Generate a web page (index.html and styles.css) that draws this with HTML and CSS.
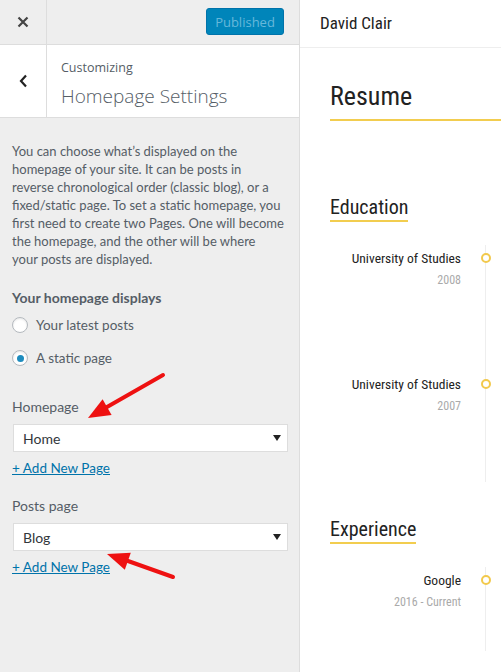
FILE: index.html
```html
<!DOCTYPE html>
<html lang="en">
<head>
    <meta charset="UTF-8">
    <title>Customize: Homepage Settings</title>
    <link rel="stylesheet" href="styles.css">
</head>
<body>
    <!-- Painel do customizer -->
    <div class="sidebar">
        <div class="topbar">
            <div class="close-btn">
                <svg width="12" height="12" viewBox="0 0 12 12"><path d="M1.5 1.5 L10.5 10.5 M10.5 1.5 L1.5 10.5" stroke="#444" stroke-width="2.2"/></svg>
            </div>
            <div class="topbar-space"></div>
            <button class="publish-button">Published</button>
        </div>

        <div class="section-head">
            <div class="back-btn">
                <svg width="9" height="14" viewBox="0 0 9 14"><path d="M7 1.5 L2 7 L7 12.5" fill="none" stroke="#222" stroke-width="2.2"/></svg>
            </div>
            <div class="section-title">
                <span class="section-sub">Customizing</span>
                <span class="section-name">Homepage Settings</span>
            </div>
        </div>

        <div class="panel">
            <p class="description">You can choose what’s displayed on the homepage of your site. It can be posts in reverse chronological order (classic blog), or a fixed/static page. To set a static homepage, you first need to create two Pages. One will become the homepage, and the other will be where your&nbsp;posts are displayed.</p>

            <div class="field-title first">Your homepage displays</div>
            <div class="radio-row"><span class="radio"></span>Your latest posts</div>
            <div class="radio-row"><span class="radio checked"></span>A static page</div>

            <div class="field-title">Homepage</div>
            <div class="select">
                <span>Home</span>
                <svg width="8" height="6" viewBox="0 0 8 6"><path d="M0 0 H8 L4 6 Z" fill="#222"/></svg>
            </div>
            <a class="add-link" href="#">+ Add New Page</a>

            <div class="field-title">Posts page</div>
            <div class="select">
                <span>Blog</span>
                <svg width="8" height="6" viewBox="0 0 8 6"><path d="M0 0 H8 L4 6 Z" fill="#222"/></svg>
            </div>
            <a class="add-link" href="#">+ Add New Page</a>
        </div>

        <!-- Setas de destaque -->
        <svg class="arrows" width="299" height="672" viewBox="0 0 299 672">
            <line x1="163" y1="375" x2="107" y2="407" stroke="#ee1111" stroke-width="4" stroke-linecap="round"/>
            <polygon points="88,418 111.6,414.9 102.6,399.3" fill="#ee1111"/>
            <line x1="173" y1="577" x2="128" y2="561" stroke="#ee1111" stroke-width="4" stroke-linecap="round"/>
            <polygon points="107,554 130.8,552.7 124.8,569.7" fill="#ee1111"/>
        </svg>
    </div>

    <!-- Pré-visualização do site -->
    <div class="preview">
        <div class="site-header">David Clair</div>
        <div class="content">
            <h1 class="page-title">Resume</h1>

            <h2 class="block-title edu">Education</h2>
            <div class="timeline">
                <div class="tl-item">
                    <div class="tl-info">
                        <div class="tl-name">University of Studies</div>
                        <div class="tl-date">2008</div>
                    </div>
                    <span class="tl-dot"></span>
                </div>
                <div class="tl-item">
                    <div class="tl-info">
                        <div class="tl-name">University of Studies</div>
                        <div class="tl-date">2007</div>
                    </div>
                    <span class="tl-dot"></span>
                </div>
            </div>

            <h2 class="block-title exp">Experience</h2>
            <div class="timeline open">
                <div class="tl-item">
                    <div class="tl-info">
                        <div class="tl-name">Google</div>
                        <div class="tl-date">2016 - Current</div>
                    </div>
                    <span class="tl-dot"></span>
                </div>
            </div>
        </div>
    </div>
</body>
</html>
```

FILE: styles.css
```css
body {
    margin: 0;
    height: 672px;
    display: flex;
    overflow: hidden;
    font-family: 'Open Sans', 'Noto Sans', sans-serif;
    background: #fff;
}

/* ---------- sidebar ---------- */

.sidebar {
    position: relative;
    width: 299px;
    flex-shrink: 0;
    background: #eee;
    border-right: 1px solid #ddd;
}

.topbar {
    display: flex;
    align-items: center;
    height: 44px;
    border-bottom: 1px solid #ddd;
}

.close-btn {
    width: 47px;
    height: 44px;
    display: flex;
    justify-content: center;
    align-items: center;
    border-right: 1px solid #ddd;
    box-sizing: border-box;
}

.topbar-space {
    flex: 1;
}

.publish-button {
    width: 78px;
    height: 27px;
    margin: 0 15px 1px 0;
    padding: 0;
    border: 1px solid #0073aa;
    border-radius: 3px;
    background: #0085ba;
    color: #66b8da;
    font-family: inherit;
    font-size: 13px;
}

.section-head {
    display: flex;
    height: 72px;
    background: #fff;
    border-bottom: 1px solid #ddd;
}

.back-btn {
    width: 47px;
    display: flex;
    justify-content: center;
    align-items: center;
    border-right: 1px solid #ddd;
    box-sizing: border-box;
}

.section-title {
    display: flex;
    flex-direction: column;
    padding: 14px 0 0 14px;
    color: #555d66;
}

.section-sub {
    font-size: 12.5px;
    line-height: 18px;
}

.section-name {
    margin-top: 6px;
    font-size: 19px;
    font-weight: 300;
    line-height: 26px;
}

.panel {
    padding: 24px 14px 0 12px;
    color: #555d66;
    font-family: 'Lato', 'Open Sans', sans-serif;
    font-size: 13px;
}

.description {
    margin: 0;
    line-height: 18px;
}

.field-title {
    margin: 28px 0 7px;
    font-size: 14px;
    line-height: 20px;
}

.field-title.first {
    margin: 20px 0 6px;
    font-weight: 700;
}

.radio-row {
    display: flex;
    align-items: center;
    height: 22px;
    margin-bottom: 11px;
    font-size: 13.5px;
}

.radio-row:last-of-type {
    margin-bottom: 0;
}

.radio {
    width: 16px;
    height: 16px;
    margin-right: 8px;
    border: 1px solid #b4b9be;
    border-radius: 50%;
    background: #fff;
    box-shadow: inset 0 1px 2px rgba(0, 0, 0, 0.1);
    box-sizing: border-box;
    display: flex;
    justify-content: center;
    align-items: center;
}

.radio.checked::after {
    content: '';
    width: 7px;
    height: 7px;
    border-radius: 50%;
    background: #1e8cbe;
}

.select {
    display: flex;
    justify-content: space-between;
    align-items: center;
    width: 275px;
    height: 28px;
    margin-left: 1px;
    padding: 0 6px 0 9px;
    box-sizing: border-box;
    background: #fff;
    border: 1px solid #ddd;
    color: #32373c;
    font-size: 14px;
}

.add-link {
    display: inline-block;
    margin-top: 7px;
    color: #0073aa;
    font-size: 13.5px;
    line-height: 18px;
}

.add-link + .field-title {
    margin-top: 19px;
}

.arrows {
    position: absolute;
    top: 0;
    left: 0;
    pointer-events: none;
}

/* ---------- preview ---------- */

.preview {
    flex: 1;
    overflow: hidden;
    font-family: 'Roboto Condensed', 'DejaVu Sans Condensed', sans-serif;
    color: #222;
}

.site-header {
    height: 47px;
    padding-left: 20px;
    border-bottom: 1px solid #eee;
    font-size: 17px;
    line-height: 47px;
}

.content {
    padding-left: 30px;
}

.page-title {
    margin: 31px 0 0;
    padding-bottom: 6px;
    border-bottom: 2px solid #f2cd4f;
    font-size: 26px;
    font-weight: 400;
    line-height: 34px;
}

.block-title {
    display: inline-block;
    margin: 73px 0 0;
    border-bottom: 2px solid #f2cd4f;
    font-size: 20px;
    font-weight: 400;
    line-height: 26px;
}

.block-title.exp {
    margin-top: 34px;
}

.timeline {
    width: 155px;
    margin-top: 23px;
    padding: 4px 0 67px;
    border-right: 1px solid #eee;
}

.timeline.open {
    padding-bottom: 40px;
}

.tl-item {
    display: flex;
    justify-content: flex-end;
    align-items: flex-start;
    margin-bottom: 86px;
}

.tl-item:last-child {
    margin-bottom: 0;
}

.tl-info {
    text-align: right;
    white-space: nowrap;
}

.tl-name {
    font-size: 13.5px;
    line-height: 18px;
}

.tl-date {
    margin-top: 4px;
    color: #aaa;
    font-size: 12px;
    line-height: 18px;
}

.tl-dot {
    width: 10px;
    height: 10px;
    margin: 4px -6px 0 20px;
    border: 2px solid #f2c94c;
    border-radius: 50%;
    background: #fff;
    box-sizing: border-box;
}
```
